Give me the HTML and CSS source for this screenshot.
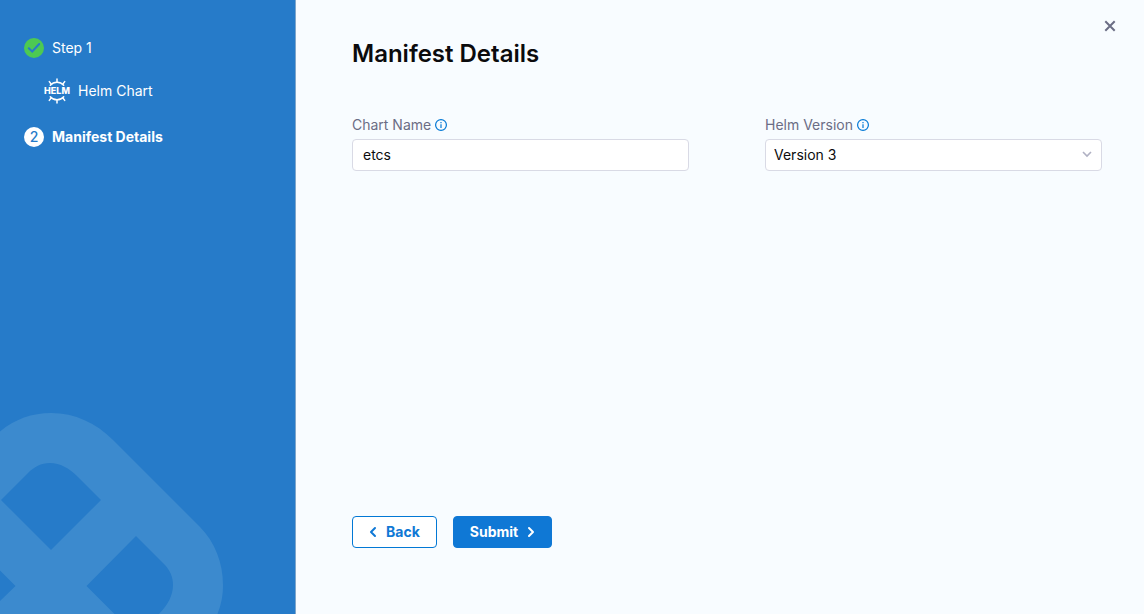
FILE: index.html
```html
<!DOCTYPE html>
<html lang="en">
<head>
<meta charset="utf-8">
<title>Manifest Details</title>
<link rel="stylesheet" href="styles.css">
</head>
<body>
<div class="wizard">
  <aside class="sidebar">
    <svg class="sidebar-art" width="224" height="202" viewBox="0 0 224 202" aria-hidden="true">
      <path fill="#3c8ace" fill-rule="evenodd" d="M0 19.500C15 7 32 1 51 1C75 1 96 11 113 28L200 115C215 130 223 151 223 173C223 184 221 193 217.500 202H159C168 193 173 183 173 173C173 165 170 158 164 152L136 124L86.500 174L114.500 202H0V189L15.500 174L0 158.500ZM1 88L51 138L101 88L78 65C69 56 60 51 50 51C41 51 34 55 28 61Z"/>
    </svg>
    <ol class="steps">
      <li class="step">
        <svg class="step-mark" width="20" height="20" viewBox="0 0 20 20" aria-hidden="true">
          <circle cx="10" cy="10" r="10" fill="#4dc952"/>
          <path d="M4.800 10.300L8.200 13.500L15.200 6" fill="none" stroke="#267bc9" stroke-width="2" stroke-linecap="round"/>
        </svg>
        <span>Step 1</span>
      </li>
      <li class="step substep">
        <svg class="helm" width="26" height="26" viewBox="0 0 26 26" aria-hidden="true">
          <g fill="none" stroke="#fff" stroke-width="1.500" stroke-linecap="round">
            <path d="M6.300 7.300A8.800 8.800 0 0 1 19.700 7.300M6.300 18.700A8.800 8.800 0 0 0 19.700 18.700"/>
            <path d="M13 4.200V1M7.300 6.200L5.300 3.600M18.700 6.200L20.700 3.600M13 21.800V25M7.300 19.800L5.300 22.400M18.700 19.800L20.700 22.400"/>
          </g>
          <text class="helm-text" x="13" y="16" text-anchor="middle">HELM</text>
        </svg>
        <span>Helm Chart</span>
      </li>
      <li class="step current" aria-current="step">
        <span class="step-mark number">2</span>
        <span>Manifest Details</span>
      </li>
    </ol>
  </aside>
  <main class="main">
    <button class="close" type="button" aria-label="Close">
      <svg width="12" height="12" viewBox="0 0 12 12" aria-hidden="true"><path d="M1.300 1.300L10.700 10.700M10.700 1.300L1.300 10.700" fill="none" stroke="#6b6d85" stroke-width="2"/></svg>
    </button>
    <h1 class="title">Manifest Details</h1>
    <form class="form">
      <div class="fields">
        <div class="field">
          <div class="label-row">
            <label for="chart-name">Chart Name</label>
            <svg width="12" height="12" viewBox="0 0 12 12" aria-hidden="true"><circle cx="6" cy="6" r="5.400" fill="none" stroke="#0278d5" stroke-width="1.200"/><path d="M6 5.200V9M6 3V4.200" stroke="#0278d5" stroke-width="1.200"/></svg>
          </div>
          <input class="control" id="chart-name" type="text" value="etcs">
        </div>
        <div class="field">
          <div class="label-row">
            <label for="helm-version">Helm Version</label>
            <svg width="12" height="12" viewBox="0 0 12 12" aria-hidden="true"><circle cx="6" cy="6" r="5.400" fill="none" stroke="#0278d5" stroke-width="1.200"/><path d="M6 5.200V9M6 3V4.200" stroke="#0278d5" stroke-width="1.200"/></svg>
          </div>
          <div class="select-wrap">
            <select class="control select" id="helm-version"><option>Version 3</option><option>Version 2</option></select>
            <svg class="chevron" width="10" height="8" viewBox="0 0 10 8" aria-hidden="true"><path d="M1 2L5 6L9 2" fill="none" stroke="#b0b1c3" stroke-width="1.600"/></svg>
          </div>
        </div>
      </div>
      <div class="actions">
        <button class="button" type="button"><svg width="8" height="12" viewBox="0 0 8 12" aria-hidden="true"><path d="M6 2L2 6L6 10" fill="none" stroke="currentColor" stroke-width="2" stroke-linecap="round" stroke-linejoin="round"/></svg>Back</button>
        <button class="button primary" type="submit">Submit<svg width="8" height="12" viewBox="0 0 8 12" aria-hidden="true"><path d="M2 2L6 6L2 10" fill="none" stroke="currentColor" stroke-width="2" stroke-linecap="round" stroke-linejoin="round"/></svg></button>
      </div>
    </form>
  </main>
</div>
</body>
</html>
```
FILE: styles.css
```css
* { box-sizing: border-box; }
body {
  margin: 0;
  font-family: Inter, "Liberation Sans", sans-serif;
  font-size: 14px;
  line-height: 20px;
  color: #0b0b0d;
}
.wizard { display: flex; min-height: 100vh; background: #f8fcff; }
.sidebar {
  position: relative;
  flex: 0 0 296px;
  padding: 38px 24px;
  background: #267bc9;
  border-right: 1px solid #7fa6cb;
  color: #fff;
}
.sidebar-art { position: absolute; left: 0; bottom: 0; }
.steps {
  display: flex;
  flex-direction: column;
  gap: 20px;
  margin: 0;
  padding: 0;
  list-style: none;
}
.step { display: flex; align-items: center; gap: 8px; }
.substep { padding-left: 20px; }
.current { margin-top: 3px; font-weight: 700; }
.step-mark { flex: none; width: 20px; height: 20px; }
.number {
  border-radius: 50%;
  background: #fff;
  color: #267bc9;
  font-weight: 500;
  text-align: center;
}
.helm { overflow: visible; }
.helm-text { font-size: 9px; font-weight: 800; fill: #fff; }
.main {
  position: relative;
  flex: 1;
  display: flex;
  flex-direction: column;
  padding: 38px 42px 66px 56px;
}
.close {
  position: absolute;
  top: 16px;
  right: 24px;
  display: flex;
  padding: 4px;
  border: 0;
  background: none;
}
.title { margin: 0; font-size: 24px; line-height: 32px; font-weight: 600; }
.form { flex: 1; display: flex; flex-direction: column; margin-top: 45px; }
.fields { display: grid; grid-template-columns: 1fr 1fr; gap: 76px; }
.label-row { display: flex; align-items: center; gap: 4px; margin-bottom: 4px; color: #6b6d85; }
.control {
  display: block;
  width: 100%;
  height: 32px;
  padding: 0 10px 2px;
  border: 1px solid #d9dae5;
  border-radius: 4px;
  background: #fff;
  color: inherit;
  font: inherit;
}
.select-wrap { position: relative; }
.select { appearance: none; padding: 0 8px; }
.chevron { position: absolute; right: 10px; top: 11px; pointer-events: none; }
.actions { display: flex; gap: 16px; margin-top: auto; }
.button {
  display: flex;
  align-items: center;
  gap: 9px;
  height: 32px;
  padding: 0 16px;
  border: 1px solid #0278d5;
  border-radius: 4px;
  background: #fff;
  color: #0f78d5;
  font: inherit;
  font-weight: 700;
}
.primary { background: #0f78d5; border-color: #0f78d5; color: #fff; }
```
